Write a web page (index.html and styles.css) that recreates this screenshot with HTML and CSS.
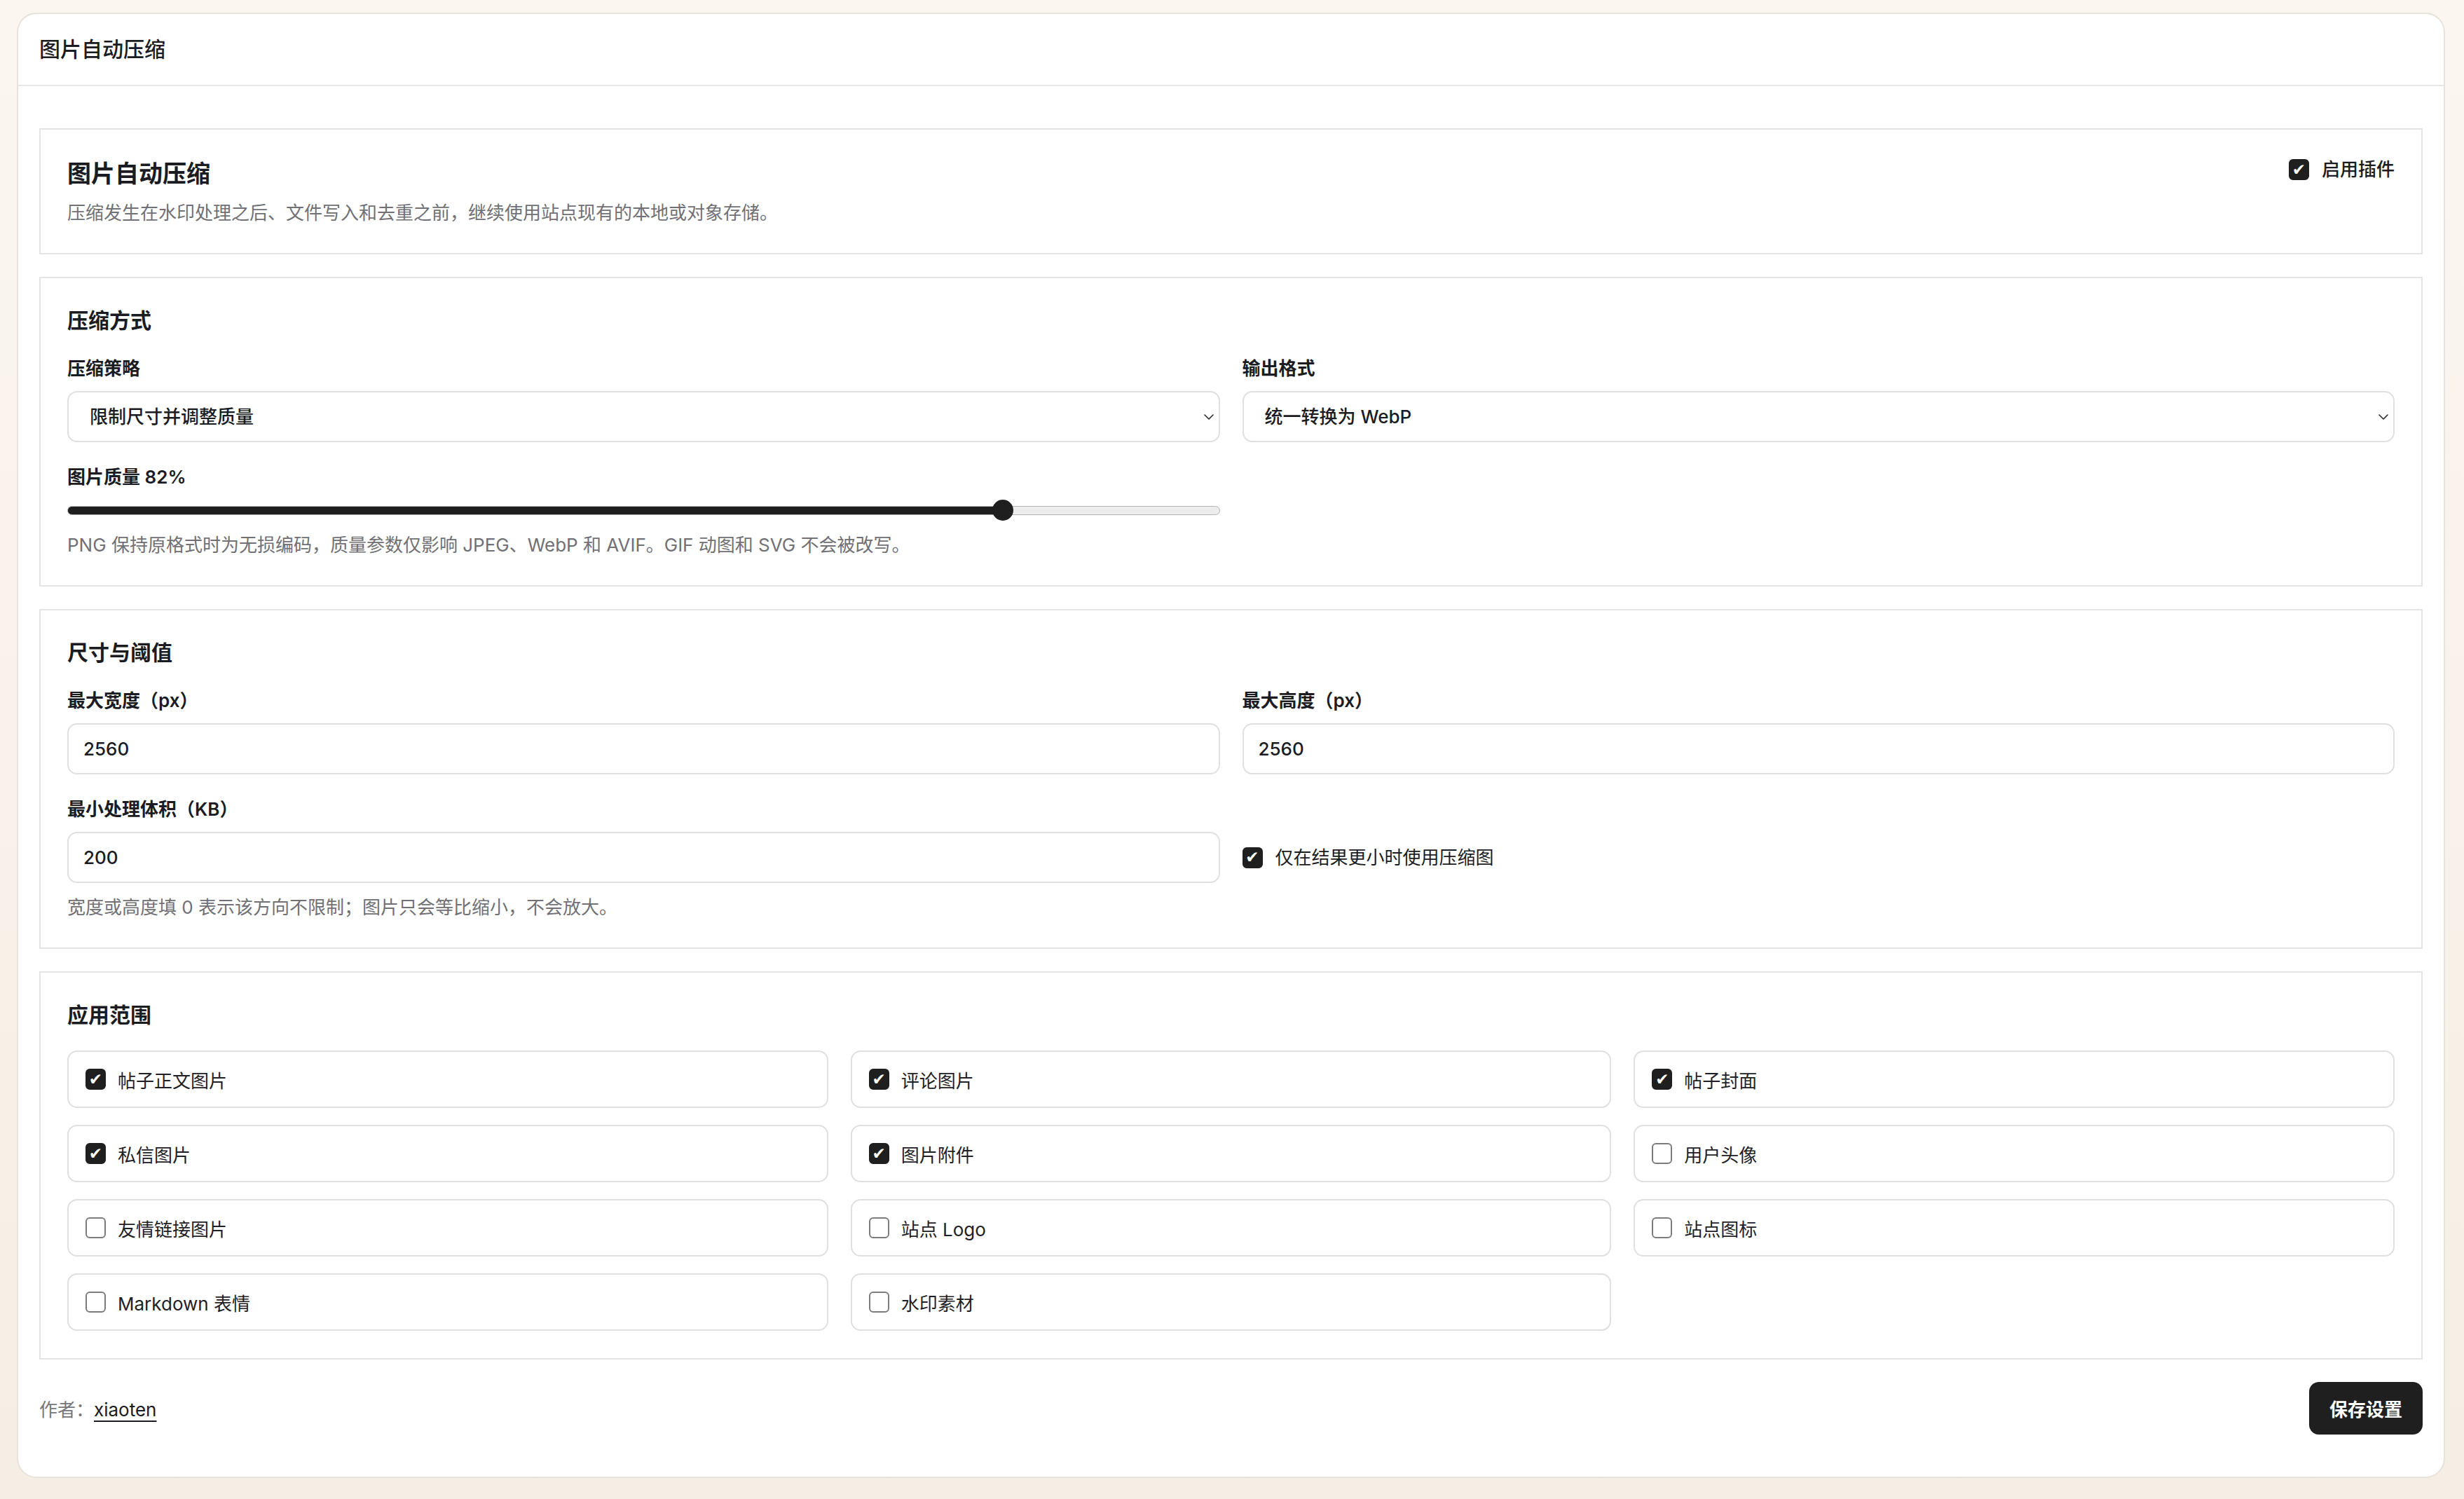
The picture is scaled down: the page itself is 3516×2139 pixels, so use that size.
FILE: index.html
```html
<!DOCTYPE html>
<html lang="zh-CN">
<head>
  <meta charset="UTF-8"/>
  <meta name="viewport" content="width=device-width, initial-scale=1.0"/>
  <title>图片自动压缩</title>
  <link rel="stylesheet" href="styles.css">
</head>
<body>
  <div class="page">
    <div class="card">
      <div class="card-header">图片自动压缩</div>

      <div class="card-body">
        <!-- intro -->
        <section class="panel intro">
          <div>
            <h1>图片自动压缩</h1>
            <p class="desc">压缩发生在水印处理之后、文件写入和去重之前，继续使用站点现有的本地或对象存储。</p>
          </div>
          <label class="check-line enable"><input type="checkbox" class="check" checked>启用插件</label>
        </section>

        <!-- compression -->
        <section class="panel">
          <h2>压缩方式</h2>
          <div class="fields">
            <div class="field">
              <label for="strategy">压缩策略</label>
              <div class="select-wrap">
                <select id="strategy">
                  <option>限制尺寸并调整质量</option>
                  <option>仅调整质量</option>
                </select>
                <svg class="chevron" width="14" height="8" viewBox="0 0 14 8"><path d="M1 1l6 6 6-6" fill="none" stroke="#2a2a2a" stroke-width="1.6" stroke-linecap="round" stroke-linejoin="round"/></svg>
              </div>
            </div>
            <div class="field">
              <label for="format">输出格式</label>
              <div class="select-wrap">
                <select id="format">
                  <option>统一转换为 WebP</option>
                  <option>保持原格式</option>
                </select>
                <svg class="chevron" width="14" height="8" viewBox="0 0 14 8"><path d="M1 1l6 6 6-6" fill="none" stroke="#2a2a2a" stroke-width="1.6" stroke-linecap="round" stroke-linejoin="round"/></svg>
              </div>
            </div>
            <div class="field">
              <label for="quality" id="qualityLabel">图片质量 82%</label>
              <input type="range" id="quality" class="range" min="1" max="100" value="82" style="--fill: 81.4%">
            </div>
          </div>
          <p class="hint">PNG 保持原格式时为无损编码，质量参数仅影响 JPEG、WebP 和 AVIF。GIF 动图和 SVG 不会被改写。</p>
        </section>

        <!-- size & threshold -->
        <section class="panel">
          <h2>尺寸与阈值</h2>
          <div class="fields">
            <div class="field">
              <label for="maxW">最大宽度（px）</label>
              <input type="text" id="maxW" class="input" value="2560">
            </div>
            <div class="field">
              <label for="maxH">最大高度（px）</label>
              <input type="text" id="maxH" class="input" value="2560">
            </div>
            <div class="field">
              <label for="minKb">最小处理体积（KB）</label>
              <input type="text" id="minKb" class="input" value="200">
            </div>
            <label class="check-line only-smaller"><input type="checkbox" class="check" checked>仅在结果更小时使用压缩图</label>
          </div>
          <p class="hint">宽度或高度填 0 表示该方向不限制；图片只会等比缩小，不会放大。</p>
        </section>

        <!-- scope -->
        <section class="panel">
          <h2>应用范围</h2>
          <div class="scope-list">
            <label class="scope-item"><input type="checkbox" class="check" checked>帖子正文图片</label>
            <label class="scope-item"><input type="checkbox" class="check" checked>评论图片</label>
            <label class="scope-item"><input type="checkbox" class="check" checked>帖子封面</label>
            <label class="scope-item"><input type="checkbox" class="check" checked>私信图片</label>
            <label class="scope-item"><input type="checkbox" class="check" checked>图片附件</label>
            <label class="scope-item"><input type="checkbox" class="check">用户头像</label>
            <label class="scope-item"><input type="checkbox" class="check">友情链接图片</label>
            <label class="scope-item"><input type="checkbox" class="check">站点 Logo</label>
            <label class="scope-item"><input type="checkbox" class="check">站点图标</label>
            <label class="scope-item"><input type="checkbox" class="check">Markdown 表情</label>
            <label class="scope-item"><input type="checkbox" class="check">水印素材</label>
          </div>
        </section>

        <div class="footer">
          <div class="author">作者：<a href="#">xiaoten</a></div>
          <button class="btn-save">保存设置</button>
        </div>
      </div>
    </div>
  </div>

  <script>
    // keep label in sync with slider
    const quality = document.getElementById('quality');
    quality.oninput = () => {
      const pct = (quality.value - quality.min) / (quality.max - quality.min);
      quality.style.setProperty('--fill', (pct * 100) + '%');
      document.getElementById('qualityLabel').textContent = `图片质量 ${quality.value}%`;
    };
  </script>
</body>
</html>
```

FILE: styles.css
```css
html, body {
  margin: 0; padding: 0;
}
body {
  background: linear-gradient(180deg, #fbf6f0 0%, #f5eee4 100%);
  color: #1a1c22;
  font-family: "Inter", "Noto Sans CJK SC", sans-serif;
}
.page {
  padding: 18px 27px 32px 24px;
}
.card {
  background: #fff;
  border: 2px solid #e7e2db;
  border-radius: 28px;
}
.card-header {
  padding: 29px 30px 30px;
  font-size: 30px; line-height: 42px; font-weight: 500;
  border-bottom: 2px solid #e6e6e6;
}
.card-body {
  padding: 60px 30px;
  display: flex; flex-direction: column;
  gap: 32px;
}
.panel {
  border: 2px solid #e4e4e4;
  padding: 39px 38px;
}
.panel h2 {
  margin: 0 0 30px;
  font-size: 30px; line-height: 42px; font-weight: 600;
}
.intro {
  display: flex; justify-content: space-between; align-items: flex-start;
}
.intro h1 {
  margin: 0;
  font-size: 34px; line-height: 48px; font-weight: 600;
}
.desc, .hint {
  margin: 0;
  font-size: 26px; line-height: 36px;
  color: #707075;
}
.desc { margin-top: 14px; }
.hint { margin-top: 17px; }

/* fields */
.fields {
  display: grid;
  grid-template-columns: 1fr 1fr;
  gap: 32px;
}
.field label {
  display: block;
  margin-bottom: 14px;
  font-size: 26px; line-height: 36px; font-weight: 600;
}
.input, .select-wrap select {
  display: block;
  width: 100%; height: 73px;
  box-sizing: border-box;
  border: 2px solid #e0e0e0; border-radius: 14px;
  background: #fff; color: #1a1c22;
  font-family: inherit; font-size: 26px; font-weight: 500;
  outline: none;
}
.input { padding: 0 21px; }
.select-wrap { position: relative; }
.select-wrap select {
  appearance: none; -webkit-appearance: none;
  padding: 0 50px 0 30px;
}
.select-wrap .chevron {
  position: absolute; right: 9px; top: 33px;
  pointer-events: none;
}

/* slider */
.range {
  -webkit-appearance: none; appearance: none;
  display: block;
  width: 100%; height: 30px; margin: 0;
  background: transparent;
}
.range::-webkit-slider-runnable-track {
  height: 13px;
  border: 1px solid #b3b3b3; border-radius: 8px;
  background: linear-gradient(to right, #1f1f1f 0 var(--fill), #ececec var(--fill) 100%);
}
.range::-webkit-slider-thumb {
  -webkit-appearance: none;
  width: 30px; height: 30px; margin-top: -9.5px;
  border: none; border-radius: 50%;
  background: #1f1f1f;
}

/* checkboxes */
.check {
  -webkit-appearance: none; appearance: none;
  flex: 0 0 auto;
  width: 29px; height: 30px; margin: 0;
  box-sizing: border-box;
  border: 2px solid #7c7c7c; border-radius: 6px;
  background: #fff;
  display: grid; place-content: center;
}
.check:checked {
  background: #1f1f1f; border-color: #1f1f1f;
}
.check:checked::after {
  content: "\2714";
  color: #fff;
  font-family: "DejaVu Sans", sans-serif;
  font-size: 23px; line-height: 1;
}
.check-line {
  display: flex; align-items: center;
  gap: 18px;
  font-size: 26px; line-height: 36px;
}
.check-line.enable { font-weight: 500; }
.check-line.only-smaller {
  align-self: end;
  height: 73px;
}

/* scope grid */
.scope-list {
  display: grid;
  grid-template-columns: repeat(3, 1fr);
  column-gap: 32px; row-gap: 24px;
}
.scope-item {
  display: flex; align-items: center;
  gap: 17px;
  height: 82px; box-sizing: border-box;
  padding: 0 24px;
  border: 2px solid #e0e0e0; border-radius: 14px;
  font-size: 26px; color: #1f2126;
}

/* footer */
.footer {
  display: flex; justify-content: space-between; align-items: center;
}
.author {
  font-size: 26px; color: #77777b;
}
.author a {
  color: #1a1c22;
  text-decoration: underline;
  text-decoration-thickness: 2px;
  text-underline-offset: 6px;
}
.btn-save {
  height: 75px;
  padding: 0 29px;
  border: none; border-radius: 14px;
  background: #1f1f1f; color: #fff;
  font-family: inherit; font-size: 26px; font-weight: 600;
  cursor: pointer;
}
```
